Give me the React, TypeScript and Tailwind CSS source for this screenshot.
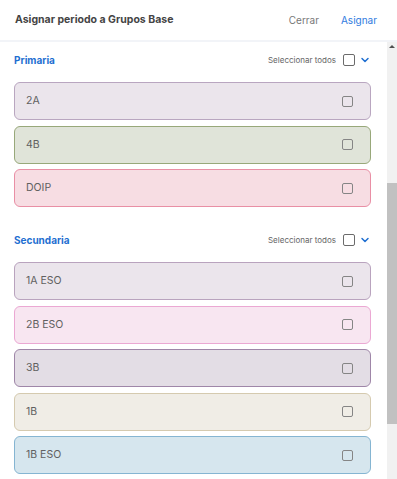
import { ChevronDown } from 'lucide-react';

// ─────────────────────────────────────────────────────────────────────────────
// Asignar periodo a Grupos Base — modal list of base groups per stage
// ─────────────────────────────────────────────────────────────────────────────

interface Grupo {
  id:     string;
  nombre: string;
  tone:   string;
}

interface Etapa {
  id:     string;
  titulo: string;
  grupos: Grupo[];
}

const ETAPAS: Etapa[] = [
  {
    id: 'primaria',
    titulo: 'Primaria',
    grupos: [
      { id: '2a',   nombre: '2A',   tone: 'bg-[#ebe5ec] border-[#b9a6c0]' },
      { id: '4b',   nombre: '4B',   tone: 'bg-[#e0e4d9] border-[#98a87a]' },
      { id: 'doip', nombre: 'DOIP', tone: 'bg-[#f7dde3] border-[#e98fa5]' },
    ],
  },
  {
    id: 'secundaria',
    titulo: 'Secundaria',
    grupos: [
      { id: '1aeso', nombre: '1A ESO', tone: 'bg-[#ebe5ec] border-[#b9a3be]' },
      { id: '2beso', nombre: '2B ESO', tone: 'bg-[#f8e6f1] border-[#eba8d3]' },
      { id: '3b',    nombre: '3B',     tone: 'bg-[#e3dde5] border-[#9f86a8]' },
      { id: '1b',    nombre: '1B',     tone: 'bg-[#f0ede6] border-[#d5caaf]' },
      { id: '1beso', nombre: '1B ESO', tone: 'bg-[#d6e6ee] border-[#85b5d2]' },
    ],
  },
];

// ── Small checkbox ────────────────────────────────────────────────────────────

function Check({ big }: { big?: boolean }) {
  return (
    <span
      className={
        big
          ? 'block w-[12px] h-[12px] rounded-[2px] border-[1.5px] border-[#6b6b6b] bg-white'
          : 'block w-[11px] h-[11px] rounded-[2px] border-[1.5px] border-[#858585]'
      }
    />
  );
}

// ── Section ───────────────────────────────────────────────────────────────────

function Seccion({ etapa }: { etapa: Etapa }) {
  return (
    <section className="flex flex-col">
      <div className="flex items-center justify-between h-[24px]">
        <h3 className="text-[10px] font-bold text-[#1f6fd1]">{etapa.titulo}</h3>
        <div className="flex items-center">
          <span className="text-[8px] text-[#666666] mr-[7px]">Seleccionar todos</span>
          <Check big />
          <ChevronDown size={12} strokeWidth={3} className="text-[#1f6fd1] ml-[4px]" />
        </div>
      </div>

      <div className="flex flex-col gap-[5.5px] mt-[10px]">
        {etapa.grupos.map(g => (
          <div
            key={g.id}
            className={`flex items-center justify-between h-[38px] rounded-[6px] border pl-[11px] pr-[17px] ${g.tone}`}
          >
            <span className="text-[10.5px] text-[#606060]">{g.nombre}</span>
            <Check />
          </div>
        ))}
      </div>
    </section>
  );
}

// ── Main component ────────────────────────────────────────────────────────────

export default function App() {
  return (
    <div
      className="w-[397px] h-[479px] flex flex-col bg-white overflow-hidden"
      style={{ fontFamily: 'Inter, "Noto Sans", sans-serif' }}
    >
      {/* Header */}
      <header className="flex items-center justify-between h-[42px] pl-[15px] pr-[20px] border-b-2 border-[#f2f4f8] shrink-0">
        <h2 className="text-[10.5px] font-bold text-[#444444]">Asignar periodo a Grupos Base</h2>
        <div className="flex items-center gap-[22px] text-[10px]">
          <span className="text-[#777777]">Cerrar</span>
          <span className="text-[#2f7be0]">Asignar</span>
        </div>
      </header>

      {/* Body + scrollbar */}
      <div className="flex flex-1 min-h-0">
        <div className="flex-1 flex flex-col gap-[21px] pt-[6px] pl-[14px] pr-[16px]">
          {ETAPAS.map(e => <Seccion key={e.id} etapa={e} />)}
        </div>

        {/* Scrollbar */}
        <div className="w-[10px] bg-[#f1f1f1] flex flex-col items-center">
          <span className="mt-[3px] w-0 h-0 border-l-[3px] border-r-[3px] border-b-[3px] border-l-transparent border-r-transparent border-b-[#505050]" />
          <div className="w-full h-[241px] mt-[135px] bg-[#c1c1c1]" />
        </div>
      </div>
    </div>
  );
}
